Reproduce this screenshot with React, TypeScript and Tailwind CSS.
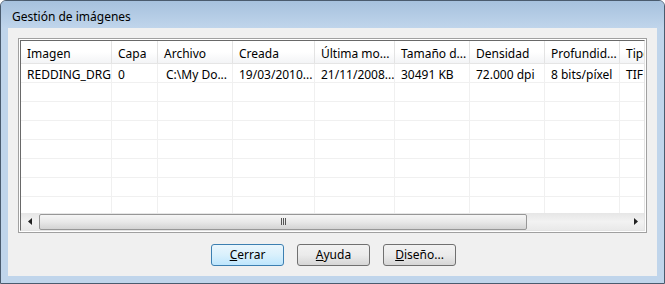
import React from "react";

const cols = [
  { h: "Imagen", v: "REDDING_DRG", w: 91 },
  { h: "Capa", v: "0", w: 46 },
  { h: "Archivo", v: "C:\\My Do...", w: 75, vp: 8 },
  { h: "Creada", v: "19/03/2010...", w: 82 },
  { h: "Última mo...", v: "21/11/2008...", w: 80 },
  { h: "Tamaño d...", v: "30491 KB", w: 75 },
  { h: "Densidad", v: "72.000 dpi", w: 75 },
  { h: "Profundid...", v: "8 bits/píxel", w: 75 },
  { h: "Tipo", v: "TIF", w: 80 },
];

const font = { fontFamily: '"Segoe UI", "Noto Sans", "Open Sans", sans-serif' };

function Btn({ label, u, def }: { label: string; u: number; def?: boolean }) {
  return (
    <div
      className={
        "w-[73px] h-[22px] rounded-[3px] border flex items-center justify-center text-[12px] text-black " +
        (def
          ? "border-[#3c7fb1] bg-gradient-to-b from-[#eaf6fd] via-[#d9f0fc] to-[#bee6fd]"
          : "border-[#707070] bg-gradient-to-b from-[#f2f2f2] via-[#ebebeb] to-[#d6d6d6]")
      }
    >
      <span>
        {label.slice(0, u)}
        <span className="underline">{label[u]}</span>
        {label.slice(u + 1)}
      </span>
    </div>
  );
}

export default function App() {
  const rows = Array.from({ length: 8 });
  return (
    <div
      className="w-[665px] h-[284px] flex flex-col border border-[#4a5b6e] rounded-t-[6px] overflow-hidden bg-[#bcd2ea]"
      style={font}
    >
      <div className="h-[27px] shrink-0 flex items-center pl-[11px] pt-[4px] bg-gradient-to-b from-[#a6c1de] to-[#c0d5eb] text-[12px] text-black">
        Gestión de imágenes
      </div>
      <div className="flex-1 flex px-[7px] pb-[7px] bg-[#c0d5eb]">
        <div className="w-[649px] bg-[#f0f0f0] flex flex-col px-[10px] pt-[10px]">
          <div className="w-[629px] h-[195px] border border-[#a0a0a0] p-[1px] bg-white">
            <div className="w-[625px] h-full border border-[#696969] border-r-[#e3e3e3] border-b-[#e3e3e3] bg-white flex flex-col overflow-hidden">
              <div className="w-[623px] flex-1 overflow-hidden">
                <div className="flex w-[679px] h-[23px] bg-gradient-to-b from-white via-white to-[#f3f4f6] border-b border-[#e5e5e5]">
                  {cols.map((c, i) => (
                    <div
                      key={i}
                      style={{ width: c.w }}
                      className="shrink-0 border-r border-[#e3e3e3] pl-[6px] pt-[3px] flex items-center text-[12px] text-black whitespace-nowrap overflow-hidden"
                    >
                      {c.h}
                    </div>
                  ))}
                </div>
                {rows.map((_, r) => (
                  <div key={r} className="flex w-[679px] h-[19px] border-b border-[#f0f0f0]">
                    {cols.map((c, i) => (
                      <div
                        key={i}
                        style={{ width: c.w, paddingLeft: c.vp ?? 6 }}
                        className="shrink-0 border-r border-[#f0f0f0] pt-[3px] flex items-center text-[12px] text-black whitespace-nowrap overflow-hidden"
                      >
                        {r === 0 ? c.v : ""}
                      </div>
                    ))}
                  </div>
                ))}
              </div>
              <div className="w-[623px] h-[17px] shrink-0 flex items-center bg-gradient-to-b from-[#e6e6e6] via-[#f2f2f2] to-[#e9e9e9]">
                <div className="w-[17px] h-full flex items-center justify-center">
                  <svg width="4" height="7" viewBox="0 0 4 7">
                    <path d="M4 0 L0 3.5 L4 7 Z" fill="#222" />
                  </svg>
                </div>
                <div className="ml-[1px] w-[488px] h-[16px] rounded-[2px] border border-[#979797] bg-gradient-to-b from-[#f6f6f6] via-[#e8e8e8] to-[#d3d3d3] flex items-center justify-center">
                  <div className="flex gap-[1px]">
                    <div className="w-[1px] h-[7px] bg-[#555]" />
                    <div className="w-[1px] h-[7px] bg-[#555]" />
                    <div className="w-[1px] h-[7px] bg-[#555]" />
                  </div>
                </div>
                <div className="flex-1" />
                <div className="w-[17px] h-full flex items-center justify-center">
                  <svg width="4" height="7" viewBox="0 0 4 7">
                    <path d="M0 0 L4 3.5 L0 7 Z" fill="#222" />
                  </svg>
                </div>
              </div>
            </div>
          </div>
          <div className="flex gap-[13px] mt-[11px] pl-[193px]">
            <Btn label="Cerrar" u={0} def />
            <Btn label="Ayuda" u={0} />
            <Btn label="Diseño..." u={0} />
          </div>
        </div>
      </div>
    </div>
  );
}
